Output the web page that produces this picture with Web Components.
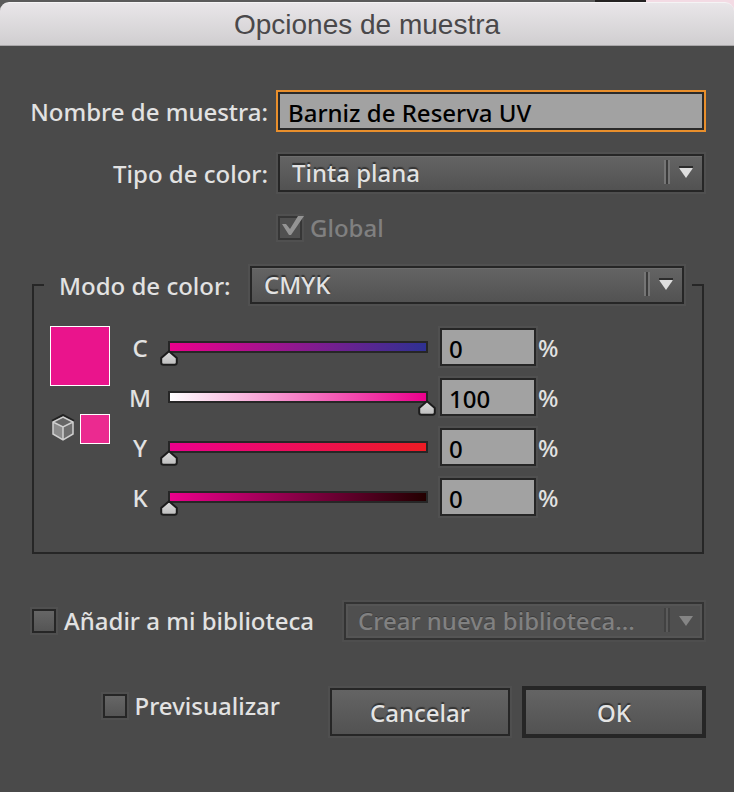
<!DOCTYPE html>
<html lang="es">
<head>
<meta charset="utf-8">
<title>Opciones de muestra</title>
<style>
  html, body { margin: 0; min-height: 100%; background: #4a4a4a; }
  body {
    --ui-font: "Noto Sans", "Open Sans", sans-serif;
    --ink: #e2e2e2;
    --edge: #262626;
    --face: linear-gradient(#646464, #525252);
    font: 500 24px/32px var(--ui-font);
    color: var(--ink);
  }
</style>
</head>
<body>
<option-dialog heading="Opciones de muestra">
  <text-field label="Nombre de muestra:" value="Barniz de Reserva UV"></text-field>
  <select-field label="Tipo de color:" value="Tinta plana"></select-field>
  <check-field class="under" label="Global" checked disabled></check-field>
  <color-group>
    <select-field slot="mode" class="inline" label="Modo de color:" value="CMYK"></select-field>
    <color-preview slot="preview"></color-preview>
    <channel-slider name="C" value="0" from="#ec008c" to="#2e3192"></channel-slider>
    <channel-slider name="M" value="100" from="#ffffff" to="#ec008c"></channel-slider>
    <channel-slider name="Y" value="0" from="#ec008c" to="#ed1c24"></channel-slider>
    <channel-slider name="K" value="0" from="#ec008c" to="#230000"></channel-slider>
  </color-group>
  <library-row slot="library"></library-row>
  <check-field slot="actions" label="Previsualizar"></check-field>
  <push-button slot="actions">Cancelar</push-button>
  <push-button slot="actions" primary>OK</push-button>
</option-dialog>

<script>
const attach = (host, html) => {
  const t = document.createElement('template');
  t.innerHTML = '<style>*{box-sizing:border-box}' + html;
  host.attachShadow({ mode: 'open' }).append(t.content.cloneNode(true));
};
const svgUrl = s => `url("data:image/svg+xml,${encodeURIComponent(s)}")`;
const arrow = (tri, cap, light, dark) => svgUrl(
  `<svg xmlns="http://www.w3.org/2000/svg" width="40" height="34"><path fill="${light}" d="M2 4h2v24h-2zM6 4h2v24h-2z"/><path fill="${dark}" d="M4 4h2v24h-2z"/><path fill="${cap}" d="M17 10h14v3h-14z"/><path fill="${tri}" d="M17 12h14l-7 10z"/></svg>`);
const thumb = svgUrl(
  `<svg xmlns="http://www.w3.org/2000/svg" width="18" height="16"><defs><linearGradient id="g" x2="0" y2="1"><stop stop-color="#dedede"/><stop offset="1" stop-color="#bdbdbd"/></linearGradient></defs><path fill="url(#g)" stroke="#1c1c1c" stroke-width="2" stroke-linejoin="round" d="M9 1.200L16.800 8v4.500q0 2.300-2.300 2.300h-11q-2.300 0-2.300-2.300V8z"/></svg>`);

customElements.define('option-dialog', class extends HTMLElement {
  connectedCallback() {
    attach(this, `
      :host { display: block; background: #4a4a4a; }
      .backdrop { background: linear-gradient(90deg, #5b5b5b 0 81%, #242222 81% 88%, #f3dbe4 88%); padding-top: 2px; }
      header { height: 44px; display: grid; place-items: center; border-radius: 9px 9px 0 0;
        border-top: 1px solid #f5f4f5; border-bottom: 1px solid #a9a7a9;
        background: linear-gradient(#e9e6e9, #d0ced0); }
      h1 { margin: 0; padding-top: 2px; font: 28px/32px "Liberation Sans", Arial, sans-serif; color: #4a484a; }
      form { padding: 46px 30px 54px; display: flex; flex-direction: column; gap: 24px; }
      .library { margin-top: 24px; }
      .actions { display: flex; justify-content: flex-end; align-items: center; gap: 14px; margin-top: 24px; }
      ::slotted(check-field[slot=actions]) { margin-right: 36px; margin-bottom: 12px; }
      ::slotted(.under) { margin-left: 248px; }
      </style>
      <div class="backdrop"><header><h1></h1></header></div>
      <form>
        <slot></slot>
        <div class="library"><slot name="library"></slot></div>
        <div class="actions"><slot name="actions"></slot></div>
      </form>`);
    this.shadowRoot.querySelector('h1').textContent = this.getAttribute('heading');
  }
});

customElements.define('text-field', class extends HTMLElement {
  connectedCallback() {
    attach(this, `
      :host { display: grid; grid-template-columns: 238px 1fr; column-gap: 10px; align-items: center; }
      label { padding-top: 2px; text-align: right; white-space: nowrap; }
      input { width: 100%; height: 38px; min-width: 0; padding: 2px 8px 0; border: 2px solid #2a2a2a; border-radius: 0;
        background: #a2a2a2; color: #000; font: 500 24px/32px var(--ui-font); outline: none; box-shadow: 0 0 0 2px #e98f2c; }
      </style><label for="f"></label><input id="f" type="text">`);
    this.shadowRoot.querySelector('label').textContent = this.getAttribute('label');
    this.shadowRoot.querySelector('input').value = this.getAttribute('value');
  }
});

customElements.define('select-field', class extends HTMLElement {
  connectedCallback() {
    attach(this, `
      :host { display: grid; grid-template-columns: 238px 1fr; column-gap: 10px; align-items: center; }
      :host(.inline) { grid-template-columns: 172px 1fr; column-gap: 19px; }
      :host(.inline) label { text-align: left; }
      :host(.bare) { display: block; }
      label { padding-top: 2px; text-align: right; white-space: nowrap; }
      select { appearance: none; display: block; width: 100%; height: 38px; min-width: 0; margin: 0; padding: 0 44px 0 12px;
        border: 2px solid var(--edge); border-radius: 0; color: #e2e2e2; font: 500 24px/32px var(--ui-font);
        text-shadow: 0 -2px 1px #333; box-shadow: 0 0 0 2px #505050, inset 0 1px #6d6d6d;
        background: ${arrow('#dedede', '#2c2c2c', '#757575', '#3b3b3b')} right / 40px 34px no-repeat, var(--face); }
      select:disabled { opacity: 1; color: #818181; border-color: #333; text-shadow: 0 -1px #3c3c3c;
        box-shadow: 0 0 0 2px #4e4e4e, inset 0 0 0 2px #555;
        background: ${arrow('#858585', '#4f4f4f', '#424242', '#5a5a5a')} right / 40px 34px no-repeat, #4f4f4f; }
      </style><label for="f"></label><select id="f"><option></option></select>`);
    const r = this.shadowRoot, label = r.querySelector('label'), select = r.querySelector('select');
    r.querySelector('option').textContent = this.getAttribute('value');
    if (this.classList.contains('bare')) {
      label.remove();
      select.setAttribute('aria-label', this.getAttribute('label'));
    } else label.textContent = this.getAttribute('label');
    select.disabled = this.hasAttribute('disabled');
  }
});

customElements.define('check-field', class extends HTMLElement {
  connectedCallback() {
    attach(this, `
      :host { display: flex; height: 24px; }
      label { display: flex; align-items: center; gap: 8px; white-space: nowrap; }
      input { appearance: none; flex: none; width: 24px; height: 24px; margin: 0; border: 2px solid var(--edge);
        background: linear-gradient(#666, #555); box-shadow: 0 0 0 2px #505050; }
      input:disabled { border-color: #363636; background: #505050; }
      input:disabled + span { color: #808080; }
      input:checked::before { content: ""; display: block; width: 26px; height: 24px; margin: -2px; background: #949494;
        clip-path: polygon(4px 8px, 8px 8px, 12px 13px, 20px 0, 26px 0, 13px 19px, 11px 19px); }
      </style><label><input type="checkbox"><span></span></label>`);
    const input = this.shadowRoot.querySelector('input');
    input.checked = this.hasAttribute('checked');
    input.disabled = this.hasAttribute('disabled');
    this.shadowRoot.querySelector('span').textContent = this.getAttribute('label');
  }
});

customElements.define('color-group', class extends HTMLElement {
  connectedCallback() {
    attach(this, `
      :host { display: block; margin: 2px 0 0 2px; }
      fieldset { margin: 0; min-width: 0; padding: 24px 10px 36px; border: 2px solid var(--edge); }
      legend { width: 100%; padding: 0 8px 0 15px; }
      .body { display: flex; gap: 22px; padding-left: 6px; }
      .channels { flex: 1; min-width: 0; display: flex; flex-direction: column; gap: 12px; }
      </style>
      <fieldset><legend><slot name="mode"></slot></legend>
        <div class="body"><slot name="preview"></slot><div class="channels"><slot></slot></div></div>
      </fieldset>`);
  }
});

customElements.define('color-preview', class extends HTMLElement {
  connectedCallback() {
    attach(this, `
      :host { flex: none; width: 60px; margin-top: -2px; }
      .big { height: 60px; border: 1px solid #fff; background: #ea148c; }
      .row { display: flex; justify-content: space-between; align-items: center; margin-top: 28px; }
      .small { width: 30px; height: 30px; border: 1px solid #fff; background: #eb2a90; }
      svg { display: block; }
      </style>
      <div class="big"></div>
      <div class="row">
        <svg width="26" height="30" viewBox="0 0 26 30" aria-hidden="true">
          <path d="M2 7L13 1l11 6" fill="none" stroke="#222" stroke-width="2"/>
          <path d="M13 3l10 5v12l-10 6L3 20V8z" fill="#858585"/>
          <path d="M13 3l10 5-10 5L3 8z" fill="#666"/>
          <path d="M3 8l10 5v13L3 20z" fill="#8c8c8c"/>
          <path d="M23 8l-10 5v13l10-6z" fill="#6e6e6e"/>
          <path d="M13 3l10 5v12l-10 6L3 20V8zM3 8l10 5 10-5M13 13v13" fill="none" stroke="#cfcfcf" stroke-width="1.500"/>
        </svg>
        <div class="small"></div>
      </div>`);
  }
});

customElements.define('channel-slider', class extends HTMLElement {
  connectedCallback() {
    attach(this, `
      :host { display: grid; grid-template-columns: 28px minmax(100px, 276px) 100px auto; height: 38px; align-items: center; justify-content: start; }
      .name { width: 16px; padding-top: 2px; display: flex; justify-content: center; }
      .range { appearance: none; align-self: end; width: 100%; height: 25px; margin: 0;
        background:
          linear-gradient(90deg, var(--from), var(--to)) 10px 2px / calc(100% - 20px) 8px no-repeat,
          linear-gradient(var(--edge), var(--edge)) 8px 0 / calc(100% - 16px) 12px no-repeat; }
      .range::-webkit-slider-runnable-track { height: 25px; background: none; }
      .range::-webkit-slider-thumb { appearance: none; width: 18px; height: 16px; margin-top: 9px; border: 0; background: ${thumb} no-repeat; }
      .amount { width: 96px; height: 38px; margin: 0 0 0 4px; padding: 2px 7px 0; border: 2px solid var(--edge); border-radius: 0;
        background: #a2a2a2; color: #000; font: 500 24px/32px var(--ui-font); box-shadow: 0 0 0 2px #505050; }
      .unit { margin-left: 2px; padding-top: 2px; }
      </style>
      <label class="name" for="r"></label><input class="range" id="r" type="range" min="0" max="100">
      <input class="amount" id="v" type="text"><label class="unit" for="v">%</label>`);
    const q = s => this.shadowRoot.querySelector(s);
    this.style.setProperty('--from', this.getAttribute('from'));
    this.style.setProperty('--to', this.getAttribute('to'));
    q('.name').textContent = this.getAttribute('name');
    q('.range').value = q('.amount').value = this.getAttribute('value');
    q('.range').addEventListener('input', e => { q('.amount').value = e.target.value; });
    q('.amount').addEventListener('input', e => { q('.range').value = e.target.value; });
  }
});

customElements.define('library-row', class extends HTMLElement {
  connectedCallback() {
    attach(this, `
      :host { display: flex; align-items: center; gap: 24px; padding-left: 2px; }
      select-field { flex: 0 1 360px; min-width: 0; margin-left: auto; }
      </style>
      <check-field label="Añadir a mi biblioteca"></check-field>
      <select-field class="bare" label="Biblioteca" value="Crear nueva biblioteca..." disabled></select-field>`);
  }
});

customElements.define('push-button', class extends HTMLElement {
  connectedCallback() {
    attach(this, `
      :host { display: block; flex: 0 1 180px; }
      button { display: block; width: 100%; height: 48px; padding: 2px 0 0; border: 2px solid var(--edge); border-radius: 0;
        background: var(--face); color: #e4e4e4; font: 500 24px/32px var(--ui-font);
        text-shadow: 0 -2px 1px #333; box-shadow: 0 0 0 2px #4f4f4f; }
      :host([primary]) button { box-shadow: 0 0 0 2px var(--edge); }
      </style><button type="button"><slot></slot></button>`);
  }
});
</script>
</body>
</html>
